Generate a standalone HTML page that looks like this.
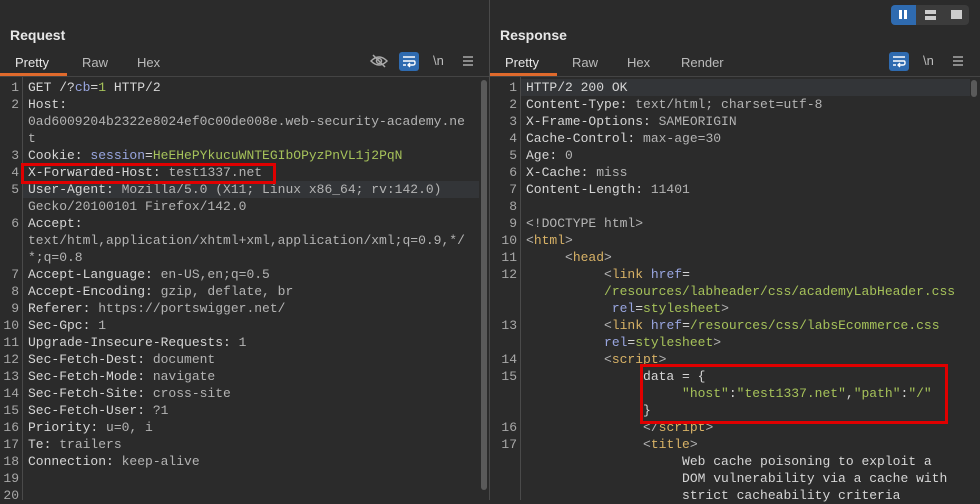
<!DOCTYPE html>
<html><head><meta charset="utf-8"><style>
*{margin:0;padding:0;box-sizing:border-box}
body{width:980px;height:500px;background:#2b2b2b;font-family:"Liberation Sans",sans-serif;overflow:hidden;position:relative;color:#ddd}
.pane{position:absolute;top:0;height:500px;background:#2b2b2b}
.title{position:absolute;top:27px;left:10px;font-weight:bold;font-size:14px;color:#e8e8e8}
.tab{position:absolute;top:55px;font-size:13px;color:#bbb}
.ul{position:absolute;top:73px;left:0;width:67px;height:3px;background:#e06a2c}
.sep{position:absolute;top:76px;left:0;right:0;height:1px;background:#444}
.ed{position:absolute;top:77px;left:0;right:0;bottom:0;background:#2b2b2b}
.gut{position:absolute;top:0;bottom:0;border-right:1px solid #4a4a4a}
.code{position:absolute;top:2px;font-family:"Liberation Mono",monospace;font-size:13px;line-height:17px;white-space:pre;color:#d6d6d6}
.ln{position:absolute;top:2px;font-family:"Liberation Mono",monospace;font-size:13px;line-height:17px;white-space:pre;color:#a8a8a8;text-align:right}
.v{color:#b4b4b4}.b{color:#99a6e0}.g{color:#a6c25a}.t{color:#d8b266}
.sb{position:absolute;width:6px;border-radius:3px;background:#5a5a5a}
.box{position:absolute;border:3px solid #e00000}
.icon{position:absolute;font-size:13px;color:#bbb}
</style></head><body>
<div class="pane" style="left:0;width:489px">
<div class="title">Request</div>
<div class="tab" style="left:15px;color:#e8e8e8">Pretty</div>
<div class="tab" style="left:82px">Raw</div>
<div class="tab" style="left:137px">Hex</div>
<div class="ul"></div><div class="sep"></div>
<svg style="position:absolute;left:370px;top:53px" width="18" height="16" viewBox="0 0 18 16"><path d="M1 8Q9 0 17 8Q9 16 1 8Z" fill="none" stroke="#aaa" stroke-width="1.5"/><circle cx="9" cy="8" r="2.5" fill="none" stroke="#aaa" stroke-width="1.5"/><path d="M3 2L15 14" stroke="#aaa" stroke-width="1.5"/></svg>
<div style="position:absolute;left:399px;top:52px;width:20px;height:19px;border-radius:3px;background:#2f6bb0"></div>
<svg style="position:absolute;left:402px;top:55px" width="14" height="13" viewBox="0 0 14 13"><path d="M1 2H13M1 6H12Q13 6 13 8Q13 10 11 10H7M1 10H4M8 8L6 10L8 12" fill="none" stroke="#fff" stroke-width="1.4"/></svg>
<div class="icon" style="left:433px;top:53px">\n</div>
<svg style="position:absolute;left:463px;top:56px" width="10" height="10"><path d="M0 1H10M0 5H10M0 9H10" stroke="#aaa" stroke-width="1.5"/></svg>
<div class="ed">
<div style="position:absolute;top:104px;left:23px;right:10px;height:17px;background:#333538"></div>
<div class="gut" style="left:0;width:23px"></div>
<div class="ln" style="left:0;width:19px">1
2


3
4
5

6


7
8
9
10
11
12
13
14
15
16
17
18
19
20</div>
<div class="code" style="left:28px">GET /?<span class="b">cb</span>=<span class="g">1</span> HTTP/2
Host:
<span class="v">0ad6009204b2322e8024ef0c00de008e.web-security-academy.ne
t</span>
Cookie: <span class="b">session</span>=<span class="g">HeEHePYkucuWNTEGIbOPyzPnVL1j2PqN</span>
X-Forwarded-Host: <span class="v">test1337.net</span>
User-Agent: <span class="v">Mozilla/5.0 (X11; Linux x86_64; rv:142.0)
Gecko/20100101 Firefox/142.0</span>
Accept:
<span class="v">text/html,application/xhtml+xml,application/xml;q=0.9,*/
*;q=0.8</span>
Accept-Language: <span class="v">en-US,en;q=0.5</span>
Accept-Encoding: <span class="v">gzip, deflate, br</span>
Referer: <span class="v">https://portswigger.net/</span>
Sec-Gpc: <span class="v">1</span>
Upgrade-Insecure-Requests: <span class="v">1</span>
Sec-Fetch-Dest: <span class="v">document</span>
Sec-Fetch-Mode: <span class="v">navigate</span>
Sec-Fetch-Site: <span class="v">cross-site</span>
Sec-Fetch-User: <span class="v">?1</span>
Priority: <span class="v">u=0, i</span>
Te: <span class="v">trailers</span>
Connection: <span class="v">keep-alive</span></div>
<div class="sb" style="left:481px;top:3px;height:410px"></div>
</div>
<div class="box" style="left:21px;top:163px;width:255px;height:21px"></div>
</div>
<div style="position:absolute;left:489px;top:0;width:1px;height:500px;background:#4a4a4a"></div>
<div class="pane" style="left:490px;width:490px">
<div class="title">Response</div>
<div class="tab" style="left:15px;color:#e8e8e8">Pretty</div>
<div class="tab" style="left:82px">Raw</div>
<div class="tab" style="left:137px">Hex</div>
<div class="tab" style="left:191px">Render</div>
<div class="ul"></div><div class="sep"></div>
<div style="position:absolute;left:401px;top:5px;width:78px;height:20px;border-radius:4px;background:#3c3c3c"></div>
<div style="position:absolute;left:401px;top:5px;width:25px;height:20px;border-radius:4px 0 0 4px;background:#2f6bb0"></div>
<div style="position:absolute;left:409px;top:10px;width:3px;height:9px;background:#fff"></div>
<div style="position:absolute;left:414px;top:10px;width:3px;height:9px;background:#fff"></div>
<div style="position:absolute;left:435px;top:10px;width:11px;height:4px;background:#ccc"></div>
<div style="position:absolute;left:435px;top:16px;width:11px;height:4px;background:#ccc"></div>
<div style="position:absolute;left:461px;top:10px;width:11px;height:9px;background:#ccc"></div>
<div style="position:absolute;left:399px;top:52px;width:20px;height:19px;border-radius:3px;background:#2f6bb0"></div>
<svg style="position:absolute;left:402px;top:55px" width="14" height="13" viewBox="0 0 14 13"><path d="M1 2H13M1 6H12Q13 6 13 8Q13 10 11 10H7M1 10H4M8 8L6 10L8 12" fill="none" stroke="#fff" stroke-width="1.4"/></svg>
<div class="icon" style="left:433px;top:53px">\n</div>
<svg style="position:absolute;left:463px;top:56px" width="10" height="10"><path d="M0 1H10M0 5H10M0 9H10" stroke="#aaa" stroke-width="1.5"/></svg>
<div class="ed">
<div style="position:absolute;top:2px;left:31px;right:10px;height:17px;background:#333538"></div>
<div class="gut" style="left:0;width:31px"></div>
<div class="ln" style="left:0;width:27px">1
2
3
4
5
6
7
8
9
10
11
12


13

14
15


16
17</div>
<div class="code" style="left:36px">HTTP/2 200 OK
Content-Type: <span class="v">text/html; charset=utf-8</span>
X-Frame-Options: <span class="v">SAMEORIGIN</span>
Cache-Control: <span class="v">max-age=30</span>
Age: <span class="v">0</span>
X-Cache: <span class="v">miss</span>
Content-Length: <span class="v">11401</span>

<span class="v">&lt;!DOCTYPE html&gt;</span>
<span class="v">&lt;</span><span class="t">html</span><span class="v">&gt;</span>
     <span class="v">&lt;</span><span class="t">head</span><span class="v">&gt;</span>
          <span class="v">&lt;</span><span class="t">link</span> <span class="b">href</span>=
          <span class="g">/resources/labheader/css/academyLabHeader.css</span>
           <span class="b">rel</span>=<span class="g">stylesheet</span><span class="v">&gt;</span>
          <span class="v">&lt;</span><span class="t">link</span> <span class="b">href</span>=<span class="g">/resources/css/labsEcommerce.css</span>
          <span class="b">rel</span>=<span class="g">stylesheet</span><span class="v">&gt;</span>
          <span class="v">&lt;</span><span class="t">script</span><span class="v">&gt;</span>
               data = {
                    <span class="g">"host"</span>:<span class="g">"test1337.net"</span>,<span class="g">"path"</span>:<span class="g">"/"</span>
               }
               <span class="v">&lt;/</span><span class="t">script</span><span class="v">&gt;</span>
               <span class="v">&lt;</span><span class="t">title</span><span class="v">&gt;</span>
                    Web cache poisoning to exploit a
                    DOM vulnerability via a cache with
                    strict cacheability criteria</div>
<div class="sb" style="left:481px;top:3px;height:17px"></div>
</div>
<div class="box" style="left:150px;top:364px;width:308px;height:60px"></div>
</div>
</body></html>
